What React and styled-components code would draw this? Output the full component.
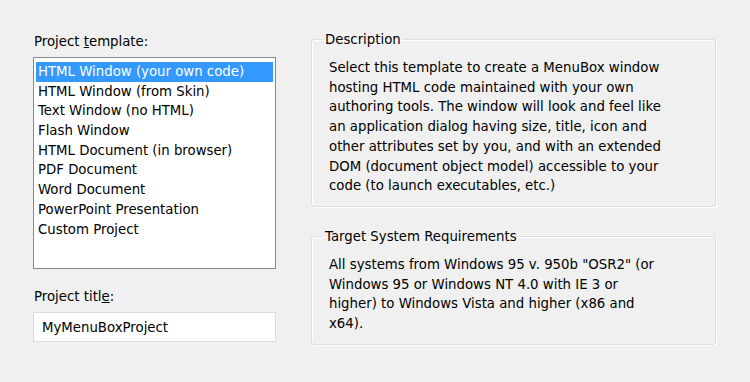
import React from 'react';
import styled, { createGlobalStyle } from 'styled-components';

const GlobalStyle = createGlobalStyle`
  html, body {
    margin: 0;
    padding: 0;
    background: #f0f0f0;
  }
  body {
    font-family: 'DejaVu Sans', Verdana, sans-serif;
    font-size: 13.3px;
    color: #000;
  }
`;

const Page = styled.div`
  width: 750px;
  height: 382px;
  box-sizing: border-box;
  padding: 30px 34px 0 33px;
  display: grid;
  grid-template-columns: 243px 405px;
  column-gap: 35px;
`;

const Column = styled.div`
  display: flex;
  flex-direction: column;
  padding-top: ${(p) => p.offset || 0}px;
`;

const Label = styled.label`
  display: block;
  height: 19px;
  line-height: 19px;
  margin: 0 0 6px 1px;
  margin-top: ${(p) => p.top || 0}px;
`;

const ListBox = styled.ul`
  list-style: none;
  margin: 0;
  padding: 4px 2px;
  height: 212px;
  box-sizing: border-box;
  border: 1px solid #828790;
  background: #fff;
`;

const ListItem = styled.li`
  height: 19.7px;
  line-height: 19px;
  padding-left: 2px;
  background: ${(p) => (p.selected ? '#3399ff' : 'transparent')};
  color: ${(p) => (p.selected ? '#fff' : '#000')};
  white-space: nowrap;
`;

const TextBox = styled.input`
  height: 30px;
  box-sizing: border-box;
  border: 1px solid #dcdcdc;
  background: #fff;
  padding: 0 8px;
  font: inherit;
  color: #000;
  outline: none;
`;

const Group = styled.fieldset`
  margin: 0;
  margin-top: ${(p) => p.top || 0}px;
  padding: 9px 14px 0 17px;
  height: ${(p) => p.h}px;
  box-sizing: border-box;
  border: 1px solid #d5dfe5;
  border-radius: 3px;
  box-shadow: inset 1px 1px 0 #fff, 1px 1px 0 #fff;
`;

const Legend = styled.legend`
  padding: 0 3px;
  margin-left: -7px;
  line-height: 19px;
`;

const Line = styled.div`
  line-height: 19.7px;
  white-space: nowrap;
`;

const templates = [
  'HTML Window (your own code)',
  'HTML Window (from Skin)',
  'Text Window (no HTML)',
  'Flash Window',
  'HTML Document (in browser)',
  'PDF Document',
  'Word Document',
  'PowerPoint Presentation',
  'Custom Project',
];

const description = [
  'Select this template to create a MenuBox window',
  'hosting HTML code maintained with your own',
  'authoring tools. The window will look and feel like',
  'an application dialog having size, title, icon and',
  'other attributes set by you, and with an extended',
  'DOM (document object model) accessible to your',
  'code (to launch executables, etc.)',
];

const requirements = [
  'All systems from Windows 95 v. 950b "OSR2" (or',
  'Windows 95 or Windows NT 4.0 with IE 3 or',
  'higher) to Windows Vista and higher (x86 and',
  'x64).',
];

export default function App() {
  return (
    <>
      <GlobalStyle />
      <Page>
        <Column offset={2}>
          <Label>
            Project <u>t</u>emplate:
          </Label>
          <ListBox>
            {templates.map((t, i) => (
              <ListItem key={t} selected={i === 0}>
                {t}
              </ListItem>
            ))}
          </ListBox>
          <Label top={18}>
            Project titl<u>e</u>:
          </Label>
          <TextBox defaultValue="MyMenuBoxProject" />
        </Column>
        <Column>
          <Group h={177}>
            <Legend>Description</Legend>
            {description.map((l) => (
              <Line key={l}>{l}</Line>
            ))}
          </Group>
          <Group top={20} h={118}>
            <Legend>Target System Requirements</Legend>
            {requirements.map((l) => (
              <Line key={l}>{l}</Line>
            ))}
          </Group>
        </Column>
      </Page>
    </>
  );
}
